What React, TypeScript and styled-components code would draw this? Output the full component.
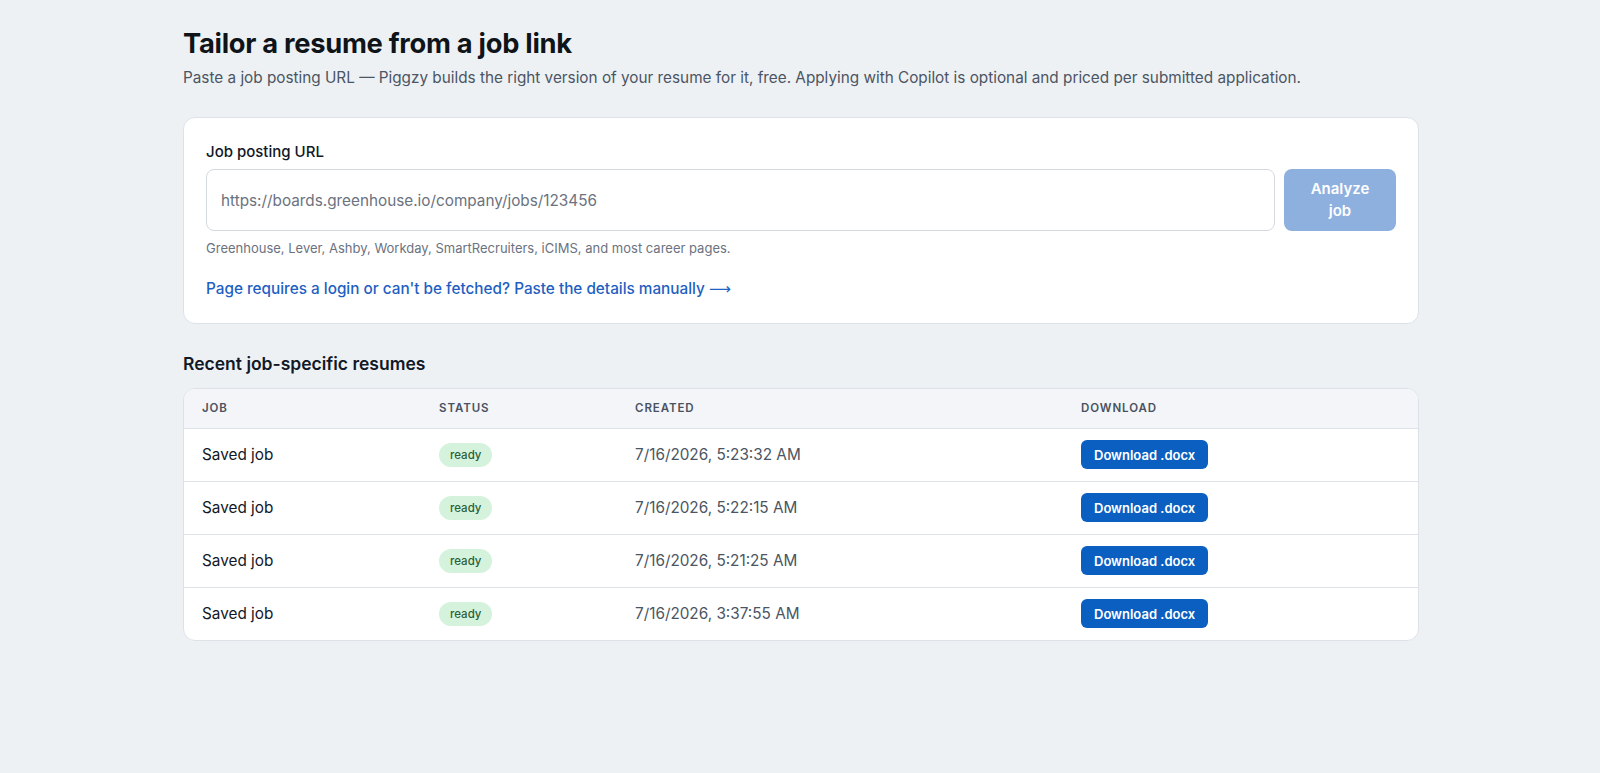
import React from 'react';
import styled, { createGlobalStyle } from 'styled-components';

const GlobalStyle = createGlobalStyle`
  html, body {
    margin: 0;
    padding: 0;
    background: #eef1f4;
    font-family: Inter, "Noto Sans", "Liberation Sans", sans-serif;
    color: #111827;
  }
`;

const Page = styled.main`
  max-width: 1236px;
  margin: 0 auto;
  padding: 27px 0 40px 2px;
`;

const Title = styled.h1`
  margin: 0;
  font-size: 27.3px;
  line-height: 34px;
  font-weight: 700;
  letter-spacing: -0.01em;
  color: #0f1419;
`;

const Subtitle = styled.p`
  margin: 6px 0 0;
  font-size: 15.3px;
  line-height: 22px;
  color: #4b5563;
`;

const Card = styled.section`
  margin-top: 28px;
  background: #fff;
  border: 1px solid #dde2e8;
  border-radius: 12px;
  padding: 23px 22px 23px;
`;

const Label = styled.label`
  display: block;
  font-size: 15px;
  line-height: 22px;
  font-weight: 450;
  color: #111827;
`;

const InputRow = styled.div`
  display: flex;
  gap: 9px;
  margin-top: 6px;
`;

const UrlInput = styled.input`
  flex: 1;
  height: 62px;
  box-sizing: border-box;
  border: 1px solid #d5dae1;
  border-radius: 8px;
  padding: 0 14px;
  font-family: inherit;
  font-size: 15.3px;
  color: #111827;
  background: #fff;
  outline: none;

  &::placeholder {
    color: #6b7280;
  }
`;

const AnalyzeButton = styled.button`
  width: 112px;
  height: 62px;
  border: none;
  border-radius: 8px;
  background: #8eb0df;
  color: #fff;
  font-family: inherit;
  font-size: 15px;
  line-height: 22px;
  font-weight: 600;
  padding: 0 20px;
  cursor: not-allowed;
`;

const Hint = styled.p`
  margin: 8px 0 0;
  font-size: 13px;
  line-height: 18px;
  color: #6b7280;
`;

const ManualLink = styled.a`
  display: inline-block;
  margin-top: 21px;
  font-size: 15.3px;
  line-height: 22px;
  font-weight: 500;
  color: #1f5fc2;
  text-decoration: none;
`;

const Arrow = styled.span`
  font-family: "DejaVu Sans", sans-serif;
  font-weight: 400;
`;

const SectionTitle = styled.h2`
  margin: 28px 0 12px;
  font-size: 17.5px;
  line-height: 24px;
  font-weight: 600;
  color: #111827;
`;

const TableWrap = styled.div`
  background: #fff;
  border: 1px solid #dde2e8;
  border-radius: 12px;
  overflow: hidden;
`;

const Table = styled.table`
  width: 100%;
  border-collapse: collapse;
  table-layout: fixed;
`;

const Th = styled.th<{ $w: number }>`
  box-sizing: border-box;
  width: ${p => p.$w}px;
  text-align: left;
  height: 39px;
  padding: 0 18px;
  background: #f3f5f8;
  border-bottom: 1px solid #dde2e8;
  font-size: 11.5px;
  font-weight: 600;
  letter-spacing: 0.08em;
  text-transform: uppercase;
  color: #4a5160;
`;

const Row = styled.tr`
  & + & td {
    border-top: 1px solid #dde2e8;
  }
`;

const Td = styled.td<{ $muted?: boolean }>`
  height: 52px;
  padding: 0 18px;
  font-size: 15.3px;
  font-weight: 400;
  color: ${p => (p.$muted ? '#4b5563' : '#111827')};
`;

const Badge = styled.span`
  display: inline-block;
  padding: 3px 11px;
  border-radius: 999px;
  background: #d5f3dc;
  color: #2d5f3a;
  font-size: 11.5px;
  line-height: 18px;
  font-weight: 500;
`;

const DownloadButton = styled.button`
  height: 29px;
  padding: 0 13px;
  border: none;
  border-radius: 6px;
  background: #0b5fc1;
  color: #fff;
  font-family: inherit;
  font-size: 13px;
  font-weight: 600;
  cursor: pointer;
`;

const resumes = [
  { job: 'Saved job', status: 'ready', created: '7/16/2026, 5:23:32 AM' },
  { job: 'Saved job', status: 'ready', created: '7/16/2026, 5:22:15 AM' },
  { job: 'Saved job', status: 'ready', created: '7/16/2026, 5:21:25 AM' },
  { job: 'Saved job', status: 'ready', created: '7/16/2026, 3:37:55 AM' },
];

export default function App() {
  return (
    <>
      <GlobalStyle />
      <Page>
        <Title>Tailor a resume from a job link</Title>
        <Subtitle>
          Paste a job posting URL — Piggzy builds the right version of your resume for it, free. Applying with Copilot is optional and priced per submitted application.
        </Subtitle>

        <Card>
          <Label htmlFor="job-url">Job posting URL</Label>
          <InputRow>
            <UrlInput id="job-url" placeholder="https://boards.greenhouse.io/company/jobs/123456" />
            <AnalyzeButton disabled>Analyze job</AnalyzeButton>
          </InputRow>
          <Hint>Greenhouse, Lever, Ashby, Workday, SmartRecruiters, iCIMS, and most career pages.</Hint>
          <ManualLink href="#">
            Page requires a login or can't be fetched? Paste the details manually <Arrow>⟶</Arrow>
          </ManualLink>
        </Card>

        <SectionTitle>Recent job-specific resumes</SectionTitle>
        <TableWrap>
          <Table>
            <thead>
              <tr>
                <Th $w={237}>Job</Th>
                <Th $w={196}>Status</Th>
                <Th $w={446}>Created</Th>
                <Th $w={355}>Download</Th>
              </tr>
            </thead>
            <tbody>
              {resumes.map((r, i) => (
                <Row key={i}>
                  <Td>{r.job}</Td>
                  <Td><Badge>{r.status}</Badge></Td>
                  <Td $muted>{r.created}</Td>
                  <Td><DownloadButton>Download .docx</DownloadButton></Td>
                </Row>
              ))}
            </tbody>
          </Table>
        </TableWrap>
      </Page>
    </>
  );
}
